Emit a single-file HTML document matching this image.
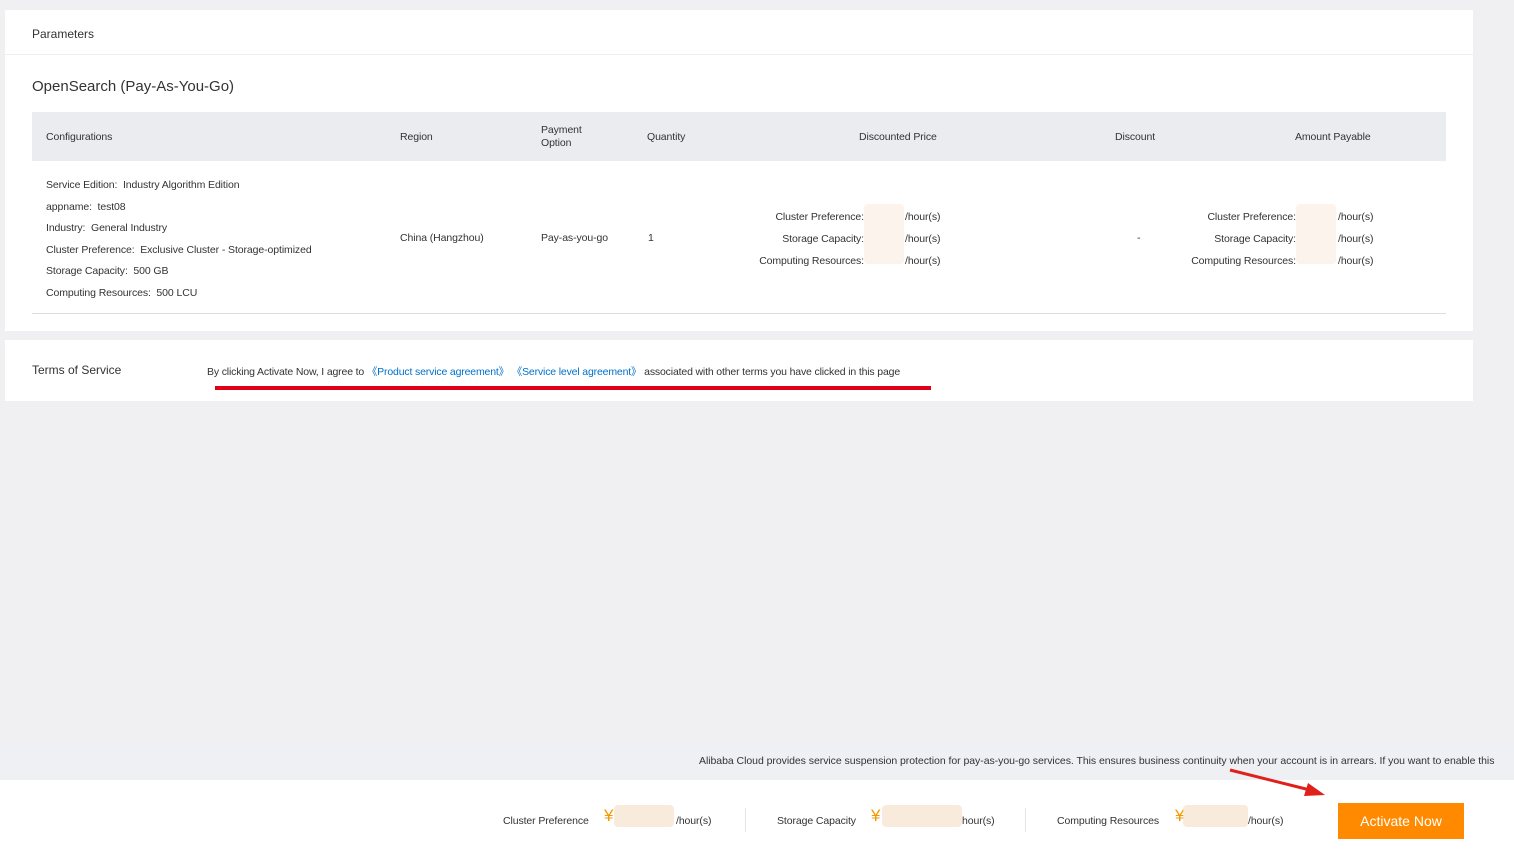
<!DOCTYPE html><html><head><style>
body{margin:0;width:1514px;height:851px;background:#f0f0f2;font-family:"Liberation Sans",sans-serif;position:relative;overflow:hidden;color:#333}
.a{position:absolute;white-space:nowrap}
.s{font-size:10.5px;letter-spacing:-0.1px}
.blur{position:absolute;background:#f7e3cc;opacity:.7;border-radius:4px}
</style></head><body>
<div class="a" style="left:5px;top:10px;width:1468px;height:321px;background:#fff"></div>
<div class="a" style="left:5px;top:54px;width:1468px;height:1px;background:#eee"></div>
<div class="a" style="left:32px;top:27px;font-size:12px">Parameters</div>
<div class="a" style="left:32px;top:78px;font-size:15px">OpenSearch (Pay-As-You-Go)</div>
<div class="a" style="left:32px;top:112px;width:1414px;height:49px;background:#ebecf0"></div>
<div class="a s" style="left:46px;top:131px">Configurations</div>
<div class="a s" style="left:400px;top:131px">Region</div>
<div class="a s" style="left:541px;top:124px;line-height:13px">Payment<br>Option</div>
<div class="a s" style="left:647px;top:131px">Quantity</div>
<div class="a s" style="left:859px;top:131px">Discounted Price</div>
<div class="a s" style="left:1115px;top:131px">Discount</div>
<div class="a s" style="left:1295px;top:131px">Amount Payable</div>
<div class="a s" style="left:46px;top:175px;line-height:21.6px">Service Edition:&nbsp; Industry Algorithm Edition<br>appname:&nbsp; test08<br>Industry:&nbsp; General Industry<br>Cluster Preference:&nbsp; Exclusive Cluster - Storage-optimized<br>Storage Capacity:&nbsp; 500 GB<br>Computing Resources:&nbsp; 500 LCU</div>
<div class="a s" style="left:400px;top:232px">China (Hangzhou)</div>
<div class="a s" style="left:541px;top:232px">Pay-as-you-go</div>
<div class="a s" style="left:648px;top:232px">1</div>
<div class="a s" style="left:1137px;top:232px">-</div>
<div class="a s" style="left:740px;top:206px;width:124px;text-align:right;line-height:22px">Cluster Preference:<br>Storage Capacity:<br>Computing Resources:</div>
<div class="blur" style="left:864px;top:204px;width:40px;height:60px;background:#fbefe4"></div>
<div class="a s" style="left:905px;top:206px;line-height:22px">/hour(s)<br>/hour(s)<br>/hour(s)</div>
<div class="a s" style="left:1170px;top:206px;width:126px;text-align:right;line-height:22px">Cluster Preference:<br>Storage Capacity:<br>Computing Resources:</div>
<div class="blur" style="left:1296px;top:204px;width:40px;height:60px;background:#fbefe4"></div>
<div class="a s" style="left:1338px;top:206px;line-height:22px">/hour(s)<br>/hour(s)<br>/hour(s)</div>
<div class="a" style="left:32px;top:313px;width:1414px;height:1px;background:#ddd"></div>
<div class="a" style="left:5px;top:340px;width:1468px;height:61px;background:#fff"></div>
<div class="a" style="left:32px;top:363px;font-size:12px">Terms of Service</div>
<div class="a s" style="left:207px;top:364px;letter-spacing:-0.16px">By clicking Activate Now, I agree to <span style="color:#0070cc">《Product service agreement》 《Service level agreement》</span> associated with other terms you have clicked in this page</div>
<div class="a" style="left:215px;top:386px;width:716px;height:4px;background:#e0001a"></div>
<div class="a" style="left:0;top:742px;width:1514px;height:38px;background:#eef0f4"></div>
<div class="a s" style="left:699px;top:755px;letter-spacing:-0.05px">Alibaba Cloud provides service suspension protection for pay-as-you-go services. This ensures business continuity when your account is in arrears. If you want to enable this</div>
<div class="a" style="left:0;top:780px;width:1514px;height:71px;background:#fff"></div>
<svg class="a" style="left:1228px;top:768px" width="100" height="30"><line x1="2" y1="2" x2="86" y2="23" stroke="#e0201a" stroke-width="3"/><polygon points="97,27 80,15 76,28" fill="#e0201a"/></svg>
<div class="a s" style="left:503px;top:815px">Cluster Preference</div>
<div class="a" style="left:604px;top:806px;color:#f39800;font-size:17px">¥</div>
<div class="blur" style="left:614px;top:805px;width:60px;height:22px"></div>
<div class="a s" style="left:676px;top:815px">/hour(s)</div>
<div class="a" style="left:745px;top:808px;width:1px;height:24px;background:#e5e5e5"></div>
<div class="a s" style="left:777px;top:815px">Storage Capacity</div>
<div class="a" style="left:871px;top:806px;color:#f39800;font-size:17px">¥</div>
<div class="blur" style="left:882px;top:805px;width:80px;height:22px"></div>
<div class="a s" style="left:962px;top:815px">hour(s)</div>
<div class="a" style="left:1025px;top:808px;width:1px;height:24px;background:#e5e5e5"></div>
<div class="a s" style="left:1057px;top:815px">Computing Resources</div>
<div class="a" style="left:1175px;top:806px;color:#f39800;font-size:17px">¥</div>
<div class="blur" style="left:1183px;top:805px;width:65px;height:22px"></div>
<div class="a s" style="left:1248px;top:815px">/hour(s)</div>
<div class="a" style="left:1338px;top:803px;width:126px;height:36px;background:#ff8a00;color:#fff;font-size:14px;line-height:36px;text-align:center">Activate Now</div>
</body></html>
